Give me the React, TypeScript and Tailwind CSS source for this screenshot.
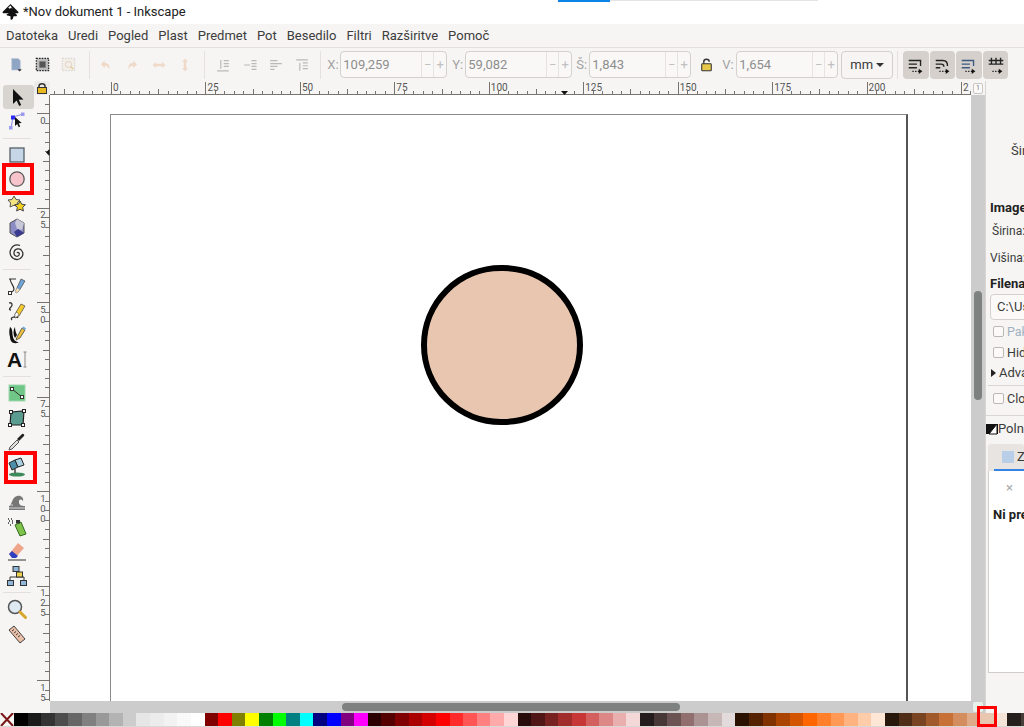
import type { ReactNode } from 'react'

const menuItems = ['Datoteka', 'Uredi', 'Pogled', 'Plast', 'Predmet', 'Pot', 'Besedilo', 'Filtri', 'Razširitve', 'Pomoč']

const swatches = [
  'bg-[#000000]', 'bg-[#1a1a1a]', 'bg-[#333333]', 'bg-[#4d4d4d]', 'bg-[#666666]', 'bg-[#808080]', 'bg-[#999999]', 'bg-[#b3b3b3]',
  'bg-[#cccccc]', 'bg-[#e6e6e6]', 'bg-[#ececec]', 'bg-[#f2f2f2]', 'bg-[#f9f9f9]', 'bg-[#ffffff]',
  'bg-[#800000]', 'bg-[#ff0000]', 'bg-[#808000]', 'bg-[#ffff00]', 'bg-[#008000]', 'bg-[#00ff00]', 'bg-[#008080]', 'bg-[#00ffff]',
  'bg-[#000080]', 'bg-[#0000ff]', 'bg-[#800080]', 'bg-[#ff00ff]',
  'bg-[#2b0000]', 'bg-[#550000]', 'bg-[#800001]', 'bg-[#aa0000]', 'bg-[#d40000]', 'bg-[#ff0001]', 'bg-[#ff2a2a]', 'bg-[#ff5555]', 'bg-[#ff8080]', 'bg-[#ffaaaa]', 'bg-[#ffd5d5]',
  'bg-[#280b0b]', 'bg-[#501616]', 'bg-[#782121]', 'bg-[#a02c2c]', 'bg-[#c83737]', 'bg-[#d35f5f]', 'bg-[#de8787]', 'bg-[#e9afaf]', 'bg-[#f4d7d7]',
  'bg-[#241c1c]', 'bg-[#483737]', 'bg-[#6c5353]', 'bg-[#916f6f]', 'bg-[#ac9393]', 'bg-[#c8b7b7]', 'bg-[#e3dbdb]',
  'bg-[#2b1100]', 'bg-[#552200]', 'bg-[#803300]', 'bg-[#aa4400]', 'bg-[#d45500]', 'bg-[#ff6600]', 'bg-[#ff7f2a]', 'bg-[#ff9955]', 'bg-[#ffb380]', 'bg-[#ffccaa]', 'bg-[#ffe6d5]',
  'bg-[#28170b]', 'bg-[#502d16]', 'bg-[#784421]', 'bg-[#a05a2c]', 'bg-[#c87137]', 'bg-[#d38d5f]', 'bg-[#deaa87]', 'bg-[#e9c6af]', 'bg-[#f4e3d7]',
  'bg-[#241f1c]', 'bg-[#483e37]',
]

function Svg({ children, size = 22 }: { children: ReactNode; size?: number }) {
  return (
    <svg width={size} height={size} viewBox="0 0 22 22" className="shrink-0">
      {children}
    </svg>
  )
}

const tools: Record<string, ReactNode> = {
  select: <path d="M7 3v15l3.6-3.4 2.6 5.4 2-1-2.5-5.2 4.8-.2z" fill="#111" />,
  node: (
    <>
      <path d="M5 18 7 7l10-3" stroke="#8a8ae0" fill="none" />
      <rect x="3" y="16" width="3.5" height="3.5" fill="#9a9af0" />
      <rect x="15" y="2.5" width="3.5" height="3.5" fill="#9a9af0" />
      <rect x="5" y="5.5" width="4" height="4" fill="#2a2af0" />
      <path d="M9 7v9l2.2-2 1.6 3.2 1.4-.7-1.5-3.2 3-.2z" fill="#111" />
    </>
  ),
  rect: <rect x="4" y="4" width="14" height="14" fill="#c6d6e6" stroke="#555e68" strokeWidth="1.3" />,
  ellipse: <circle cx="11" cy="11" r="7.2" fill="#f8c4cc" stroke="#5a5a5a" strokeWidth="1.3" />,
  star: (
    <>
      <path d="m8 3 2 3.500 4 .5-2.800 3 .8 4-4-1.800L4 14l.6-4L2 7l4-.5z" fill="#f2e37e" stroke="#555" />
      <path d="m14 8 1.700 3.200 3.700.5-2.700 2.600.7 3.700-3.400-1.800-3.300 1.800.6-3.700-2.600-2.600 3.700-.5z" fill="#f4d21c" stroke="#444" />
    </>
  ),
  box: (
    <>
      <path d="m11 2 7 4v10l-7 4-7-4V6z" fill="#8c8cc4" stroke="#555" />
      <path d="m11 2 7 4-2 7-5-1-2-6z" fill="#c8c8d8" />
      <path d="m8 15 4-3 6 4-7 4z" fill="#3a3a90" />
    </>
  ),
  spiral: <path d="M11 11c1-1.500 3 0 2 2-1.500 2.500-5.500 1-5-2.500.5-4 6-5 8-1.500 2.500 4-1 9-5.500 8.500-5-.5-8-6-5.500-10.500C7 3 11 2 14 3.500" fill="none" stroke="#333" strokeWidth="1.3" />,
  pencil: (
    <>
      <path d="M3 4h7M4 4c1 5 4 7 4 10s-3 3-4 4" fill="none" stroke="#333" strokeWidth="1.2" />
      <rect x="2.5" y="16.5" width="3" height="3" fill="#fff" stroke="#333" />
      <path d="m10 15 5-11 4 2-6 10-3 2z" fill="#6ea5d8" stroke="#444" strokeWidth=".7" />
      <path d="m10 15 1-2 3 2-1 1-3 2z" fill="#f2d9b0" />
    </>
  ),
  pen: (
    <>
      <path d="M3 3c3-1 4 2 2 4s-2 3 0 3M6 20c-3-3 5-4 6-2" fill="none" stroke="#333" strokeWidth="1.3" />
      <path d="m9 14 6-10 4 2-6 10-4 2z" fill="#f3c92e" stroke="#444" strokeWidth=".7" />
      <path d="m9 14 2-2 2 3-4 3z" fill="#fff" stroke="#444" strokeWidth=".5" />
    </>
  ),
  calligraphy: (
    <>
      <path d="M4 3c3 2 2 6 3 10 .5 3 3 5 6 5-5 3-9 0-9-5-1-3-1-7 0-10z" fill="#111" />
      <path d="M9 3c0 3 1 6 2 8l-2 3C7 11 7 6 9 3z" fill="#111" />
      <path d="m11 13 5-9 3 2-5 8-4 2z" fill="#e9c040" stroke="#333" strokeWidth=".7" />
      <path d="m16 4 1.500-1.500 2.500 2-1 1.500z" fill="#6ea5d8" />
    </>
  ),
  text: (
    <>
      <text x="1" y="18" fontSize="21" fontWeight="700" fill="#111" fontFamily="Liberation Sans, sans-serif">A</text>
      <path d="M17.500 3h3m-1.500 0v15m-1.500 0h3" stroke="#888" fill="none" />
    </>
  ),
  gradient: (
    <>
      <rect x="3" y="3" width="16" height="16" fill="#6fc686" stroke="#9ed8ad" />
      <path d="m6 7 10 8" stroke="#333" />
      <rect x="4.5" y="5.5" width="3" height="3" fill="#fff" stroke="#333" />
      <rect x="14.5" y="13.5" width="3" height="3" fill="#fff" stroke="#333" />
    </>
  ),
  mesh: (
    <>
      <path d="m5 5 13-1-1 14H4z" fill="#5b9c90" stroke="#222" strokeWidth="1.2" />
      <rect x="3.5" y="3.5" width="3" height="3" fill="#fff" stroke="#222" />
      <rect x="16.5" y="2.5" width="3" height="3" fill="#fff" stroke="#222" />
      <rect x="2.5" y="16.5" width="3" height="3" fill="#fff" stroke="#222" />
      <rect x="15.5" y="16.5" width="3" height="3" fill="#fff" stroke="#222" />
    </>
  ),
  dropper: (
    <>
      <path d="m3 19 1-3 7-7 2 2-7 7z" fill="#ddd" stroke="#555" />
      <path d="m11 8 5-5c1-1 3 1 2 2l-5 5z" fill="#222" />
    </>
  ),
  bucket: (
    <>
      <ellipse cx="11" cy="18.5" rx="8" ry="2" fill="#3d8a5c" />
      <path d="M9 13v4" stroke="#444" strokeWidth="1.5" />
      <path d="m3 7 6-3 3 7-6 3z" fill="#4d8fa8" stroke="#222" />
      <path d="m9 4 6-2 3 7-6 2z" fill="#a9cfe0" stroke="#222" />
    </>
  ),
  tweak: (
    <>
      <path d="M3 15c3-1 3-9 8-10 4-1 7 2 6 5-2-2-4-2-4 1s2 4 6 4v4H3z" fill="#777" />
      <path d="M3 14h4M2 17h18" stroke="#fff" strokeWidth=".7" />
    </>
  ),
  spray: (
    <>
      <path d="m9 9 6-3 5 12-6 2z" fill="#7fc34a" stroke="#2f6b1f" />
      <rect x="10" y="4" width="4" height="3.5" fill="#333" />
      <path d="M2 3h1m2 0h1M3 5h1m2 0h1M2 7h1m3 0h1M4 9h1" stroke="#333" strokeWidth="1.3" />
    </>
  ),
  eraser: (
    <>
      <path d="m3 14 9-11 6 5-8 9H6z" fill="#eea58c" />
      <path d="m3 14 3-3 6 5-2 2H6z" fill="#2f3fc0" />
      <path d="M2 20h18" stroke="#333" />
    </>
  ),
  connector: (
    <>
      <path d="M4 16v-4h14v4M11 6v6" fill="none" stroke="#333" />
      <rect x="7" y="1.5" width="6" height="5" fill="#8fb5d8" stroke="#333" />
      <rect x="10.5" y="7" width="6" height="5" fill="#f0d050" stroke="#333" />
      <rect x="1.5" y="15.5" width="6" height="5" fill="#8fb5d8" stroke="#333" />
      <rect x="14.5" y="15.5" width="6" height="5" fill="#8fb5d8" stroke="#333" />
    </>
  ),
  zoom: (
    <>
      <circle cx="9" cy="9" r="6.5" fill="#dfe9f2" stroke="#555" strokeWidth="1.5" />
      <path d="m14 14 5.500 5.500" stroke="#d9a52c" strokeWidth="3" strokeLinecap="round" />
    </>
  ),
  measure: (
    <>
      <path d="m3 7 5-4 11 13-5 4z" fill="#e9bda6" stroke="#444" />
      <path d="m6 8 2-1.500m0 3.500 2-1.500m0 3.500 2-1.500m0 3.500 2-1.500" stroke="#444" />
    </>
  ),
}

function ToolIcon({ name, active, boxed }: { name: string; active?: boolean; boxed?: string }) {
  return (
    <div className={active ? 'relative ml-[3px] flex h-[24px] w-[31px] items-center justify-center rounded-[3px] bg-[#d8d4d0] pr-[3px]' : 'relative ml-[3px] flex h-[24.5px] w-[31px] items-center justify-center pr-[3px]'}>
      <Svg>{tools[name]}</Svg>
      {boxed && <div className={boxed} />}
    </div>
  )
}

function ToolSep() {
  return <div className="mx-[3px] my-[4px] h-px bg-[#e2dfdc]" />
}

function Toolbox() {
  return (
    <div className="flex w-[34px] shrink-0 flex-col bg-[#f6f5f4] pt-[4px]">
      <ToolIcon name="select" active />
      <ToolIcon name="node" />
      <ToolSep />
      <ToolIcon name="rect" />
      <ToolIcon name="ellipse" boxed="absolute -left-[1px] -top-[4px] h-[32px] w-[32px] border-4 border-[#ff0000]" />
      <ToolIcon name="star" />
      <ToolIcon name="box" />
      <ToolIcon name="spiral" />
      <ToolSep />
      <ToolIcon name="pencil" />
      <ToolIcon name="pen" />
      <ToolIcon name="calligraphy" />
      <ToolIcon name="text" />
      <ToolSep />
      <ToolIcon name="gradient" />
      <ToolIcon name="mesh" />
      <ToolIcon name="dropper" />
      <ToolIcon name="bucket" boxed="absolute left-[1px] -top-[4px] h-[33px] w-[33px] border-4 border-[#ff0000]" />
      <div className="h-[11px]" />
      <ToolIcon name="tweak" />
      <ToolIcon name="spray" />
      <ToolIcon name="eraser" />
      <ToolIcon name="connector" />
      <ToolSep />
      <ToolIcon name="zoom" />
      <ToolIcon name="measure" />
    </div>
  )
}

function SmallIcon({ children }: { children: ReactNode }) {
  return <div className="flex w-[26.3px] shrink-0 justify-center">{children}</div>
}

function BarSep() {
  return <div className="mx-[3px] h-[28px] w-px shrink-0 bg-[#e4e1de]" />
}

function NumField({ label, value, width, labelWidth }: { label: string; value: string; width: string; labelWidth: string }) {
  return (
    <div className="flex items-center">
      <span className={labelWidth + ' text-[13px] text-[#a3a3a3]'}>{label}</span>
      <div className={width + ' flex h-[27px] items-center rounded-[4px] border border-[#d4d0cc] bg-[#f9f8f7] text-[13px] text-[#8e8e8e]'}>
        <span className="flex-1 pl-[2px]">{value}</span>
        <span className="flex h-full w-[12px] items-center justify-center border-l border-[#e6e3e0] text-[#c0c0c0]">−</span>
        <span className="flex h-full w-[13px] items-center justify-center border-l border-[#e6e3e0] text-[#c0c0c0]">+</span>
      </div>
    </div>
  )
}

function SnapButton({ children }: { children: ReactNode }) {
  return <div className="flex h-[28px] w-[25.5px] items-center justify-center rounded-[4px] bg-[#d5d0cb]">{children}</div>
}

function Toolbar() {
  return (
    <div className="flex h-[33px] shrink-0 items-center bg-[#f6f5f4] pl-[3px]">
      <SmallIcon>
        <Svg size={16}>
          <path d="M5 2h9l3 3v13H5z" fill="#8fa5c4" stroke="#c4ccd8" />
          <path d="M13 17h6l-3 3z" fill="#333" />
        </Svg>
      </SmallIcon>
      <SmallIcon>
        <Svg size={17}>
          <rect x="3" y="3" width="16" height="16" fill="#bbb" stroke="#222" strokeWidth="1.5" strokeDasharray="2 1.5" />
          <rect x="7" y="7" width="8" height="8" fill="#555" />
        </Svg>
      </SmallIcon>
      <SmallIcon>
        <Svg size={17}>
          <rect x="3" y="3" width="16" height="16" fill="#f3efe6" stroke="#c8c8c8" strokeDasharray="2 1.5" />
          <circle cx="11" cy="11" r="4" fill="none" stroke="#d8c8c0" />
          <path d="m14 14 3 3" stroke="#e3cf9e" strokeWidth="2" />
        </Svg>
      </SmallIcon>
      <div className="w-[4px]" />
      <BarSep />
      <SmallIcon>
        <Svg size={14}>
          <path d="M9 4 3 10l6 6v-4c4 0 6 2 7 6 2-7-2-10-7-10z" fill="#efd9c9" />
        </Svg>
      </SmallIcon>
      <SmallIcon>
        <Svg size={14}>
          <path d="m13 4 6 6-6 6v-4c-4 0-6 2-7 6-2-7 2-10 7-10z" fill="#efd9c9" />
        </Svg>
      </SmallIcon>
      <SmallIcon>
        <Svg size={14}>
          <path d="m1 11 5-5v3h10V6l5 5-5 5v-3H6v3z" fill="#efd9c9" />
        </Svg>
      </SmallIcon>
      <SmallIcon>
        <Svg size={14}>
          <path d="m11 1 5 5h-3v10h3l-5 5-5-5h3V6H6z" fill="#efd9c9" />
        </Svg>
      </SmallIcon>
      <div className="w-[3px]" />
      <BarSep />
      <div className="w-[2px]" />
      {['M3 19h16M8 4v12M12 5h7M12 9h7M12 13h7', 'M3 11h8M13 5h7M13 9h7M13 13h7M13 17h7', 'M3 5h10M3 9h16M3 13h10M3 17h6', 'M3 4h16M8 8v11M12 8h7M12 12h7M12 16h7'].map((d) => (
        <SmallIcon key={d}>
          <Svg size={16}>
            <path d={d} stroke="#b9b9b9" strokeWidth="1.6" fill="none" />
          </Svg>
        </SmallIcon>
      ))}
      <div className="w-[2px]" />
      <BarSep />
      <div className="w-[3px]" />
      <NumField label="X:" labelWidth="w-[13px]" value="109,259" width="w-[107px]" />
      <div className="w-[5px]" />
      <NumField label="Y:" labelWidth="w-[13px]" value="59,082" width="w-[107px]" />
      <div className="w-[4px]" />
      <NumField label="Š:" labelWidth="w-[13px]" value="1,843" width="w-[102px]" />
      <div className="flex w-[31px] justify-center">
        <Svg size={15}>
          <path d="M7 10V7c0-5 8-5 8 0" fill="none" stroke="#333" strokeWidth="2" />
          <rect x="4" y="10" width="14" height="10" rx="1" fill="#e8c84a" stroke="#333" strokeWidth="1.5" />
        </Svg>
      </div>
      <NumField label="V:" labelWidth="w-[14px]" value="1,654" width="w-[102px]" />
      <div className="w-[3px]" />
      <div className="flex h-[28px] w-[52px] items-center justify-center gap-[3px] rounded-[4px] border border-[#d4d0cc] bg-[#f6f5f4] text-[13px] text-[#3a3a3a]">
        mm
        <span className="h-0 w-0 border-x-[4px] border-t-[4px] border-x-transparent border-t-[#333]" />
      </div>
      <div className="w-[1px]" />
      <BarSep />
      <div className="w-[2px]" />
      <div className="flex gap-px">
        {['M3 6h13v6M3 10h9M3 14h9', 'M3 6h8c4 0 5 3 5 6M3 10h6c2 0 3 1 3 3M3 14h5', 'M3 6h13v6M3 10h9M3 14h9', 'M3 6h16M3 10h16M6 3v7M11 3v7M16 3v7'].map((d, i) => (
          <SnapButton key={i}>
            <Svg size={20}>
              <path d={d} stroke={i === 2 ? '#3d5a80' : '#222'} strokeWidth="1.5" fill="none" />
              <path d="M7 18h9" stroke="#222" strokeWidth="1.5" strokeDasharray="1.5 1.5" />
              <path d="m14 15 4 3-4 3z" fill="#111" />
            </Svg>
          </SnapButton>
        ))}
      </div>
    </div>
  )
}

const rulerStep = 94.45

function TopRuler() {
  const ticks = Array.from({ length: 98 }, (_, i) => i)
  const labels = ['0', '25', '50', '75', '100', '125', '150', '175', '200', '2']
  return (
    <svg width="921" height="14" className="block shrink-0">
      <path d="M0 13.5h921" stroke="#77736f" />
      {ticks.map((i) => {
        const x = Math.round(61 - 56.67 + (i * rulerStep) / 10) + 0.5
        const major = (i - 6) % 10 === 0
        const mid = (i - 6) % 5 === 0
        return <path key={i} d={'M' + x + ' 14V' + (major ? 1 : mid ? 8 : 10)} stroke="#77736f" />
      })}
      {labels.map((t, i) => (
        <text key={t + i} x={63 + i * rulerStep} y="10" fontSize="10" fill="#555" fontFamily="Roboto, sans-serif">{t}</text>
      ))}
      <path d="m511 10 7 0-3.5 4z" fill="#111" />
    </svg>
  )
}

function LeftRuler() {
  const ticks = Array.from({ length: 65 }, (_, i) => i)
  const labels = ['0', '25', '50', '75', '100', '125', '15']
  return (
    <svg width="16" height="606" className="block shrink-0">
      <path d="M15.5 0v606" stroke="#77736f" />
      {ticks.map((i) => {
        const y = Math.round(18.5 - 9.45 + (i * rulerStep) / 10) + 0.5
        const major = (i - 1) % 10 === 0
        const mid = (i - 1) % 5 === 0
        return <path key={i} d={'M' + (major ? 3 : mid ? 9 : 11) + ' ' + y + 'H16'} stroke="#77736f" />
      })}
      {labels.map((t, i) => (
        <text key={t} textAnchor="middle" fontSize="9.5" fill="#555" fontFamily="Roboto, sans-serif">
          {t.split('').map((c, j) => (
            <tspan key={j} x="9" y={29 + i * rulerStep + j * 10}>{c}</tspan>
          ))}
        </text>
      ))}
      <path d="M12 57.5l3.5-3.5v7z" fill="#111" />
    </svg>
  )
}

function Canvas() {
  return (
    <div className="min-w-0 flex-1 overflow-hidden bg-white pl-[60px] pt-[19px]">
      <div className="h-[700px] w-[798px] border-t border-r-2 border-l border-t-[#8a8a8a] border-r-[#555] border-l-[#8a8a8a] bg-white pl-[310px] pt-[150px]">
        <div className="h-[160px] w-[162px] rounded-full border-[6px] border-black bg-[#e9c6af]" />
      </div>
    </div>
  )
}

function Check({ label, muted }: { label: string; muted?: boolean }) {
  return (
    <div className={muted ? 'flex h-[21px] items-center pl-[7px] text-[12.5px] text-[#9fb0c0]' : 'flex h-[21px] items-center pl-[7px] text-[12.5px] text-[#3a3a3a]'}>
      <span className="mr-[3px] h-[11px] w-[11px] shrink-0 rounded-[2px] border border-[#bdb8b3] bg-[#fbfaf9]" />
      {label}
    </div>
  )
}

function Panel() {
  return (
    <div className="flex w-[39px] shrink-0 flex-col overflow-hidden whitespace-nowrap border-l border-[#d8d5d2] bg-[#f6f5f4] text-[13px] leading-[18px] text-[#3a3a3a]">
      <div className="h-[61px] shrink-0" />
      <div className="h-[57px] shrink-0 pl-[25px]">
        <span>Širina:</span>
      </div>
      <div className="flex flex-col">
        <div className="pl-[4px] font-bold text-[#222]">Image</div>
        <div className="mt-[5px] pl-[6px] text-[12px]">Širina:</div>
        <div className="mt-[9px] pl-[4px] text-[12px]">Višina:</div>
        <div className="mt-[8px] pl-[4px] font-bold text-[#222]">Filename</div>
        <div className="ml-[4px] mt-[1px] flex h-[26px] w-[60px] shrink-0 items-center rounded-[4px] border border-[#d4d0cc] bg-[#fbfaf9] pl-[6px]">{'C:\\Users'}</div>
      </div>
      <div className="pt-[1px]">
        <Check label="Paket" muted />
        <Check label="Hide" />
        <div className="flex h-[19px] items-center pl-[5px]">
          <span className="mr-[3px] h-0 w-0 border-y-[4px] border-l-[5px] border-y-transparent border-l-[#222]" />
          Advanced
        </div>
        <div className="ml-[2px] mt-[3px] h-px bg-[#d8d5d2]" />
        <div className="mt-[2px]"><Check label="Clone" /></div>
      </div>
      <div className="mt-[6px] flex h-[26px] shrink-0 items-center border-t border-[#d8d5d2]">
        <svg width="12" height="12" viewBox="0 0 12 12" className="shrink-0">
          <path d="M0 1h12v10H0z" fill="#111" />
          <path d="M11 1 3 11h8z" fill="#fff" stroke="#111" />
        </svg>
        <span>Polnilo</span>
      </div>
      <div className="ml-[2px] mt-[3px] flex min-h-0 flex-1 flex-col">
        <div className="flex h-[27px] shrink-0 flex-col rounded-t-[3px] bg-[#e7e4e1]">
          <div className="flex flex-1 items-center pl-[14px]">
            <span className="mr-[3px] h-[12px] w-[12px] shrink-0 bg-[#b9cfe8]" />
            Zapolni
          </div>
          <div className="ml-[6px] h-[2px] bg-[#3584e4]" />
        </div>
        <div className="h-[202px] shrink-0 border-b border-l border-[#d0cdca] bg-white pl-[4px]">
          <div className="pl-[13px] pt-[8px] text-[#aaa]">×</div>
          <div className="mt-[9px] font-bold text-[#222]">Ni predmeta</div>
        </div>
      </div>
    </div>
  )
}

export default function App() {
  return (
    <div className="relative flex h-[727px] w-[1024px] flex-col overflow-hidden bg-white font-['Roboto',sans-serif]">
      <div className="absolute left-[558px] top-0 h-px w-[260px] bg-[#e4e4e4]" />
      <div className="absolute left-[558px] top-0 h-[1.5px] w-[52px] bg-[#0a84e6]" />

      <div className="flex h-[24px] shrink-0 items-center pl-[2px] text-[13px] text-[#222]">
        <svg width="17" height="17" viewBox="0 0 22 22" className="mr-[4px] shrink-0">
          <path d="M11 0 21 10c1 1 0 2-1 2h-3l2 2c1 1 0 2-1 2h-3l-1 3c-1 2-3 2-3 0v-3l-4-1c-2 0-1-2 0-2L9 12 3 12c-2 0-3-1-2-2z" fill="#111" />
          <path d="m11 2-3 3 2 1 2-1 2 2z" fill="#fff" />
        </svg>
        *Nov dokument 1 - Inkscape
      </div>

      <div className="flex h-[24px] shrink-0 items-center gap-[10px] border-b border-[#e2dfdc] bg-[#f6f5f4] pl-[6px] text-[13px] text-[#3c3c3c]">
        {menuItems.map((m) => (
          <span key={m}>{m}</span>
        ))}
      </div>

      <Toolbar />

      <div className="flex h-[632px] shrink-0">
        <Toolbox />
        <div className="flex w-[951px] shrink-0 flex-col">
          <div className="flex h-[14px] shrink-0 bg-[#f6f5f4]">
            <div className="flex w-[16px] shrink-0 items-center justify-center rounded-[2px] bg-[#ecebe9]">
              <svg width="12" height="12" viewBox="0 0 12 12">
                <path d="M3 6V4c0-3 6-3 6 0v2" fill="none" stroke="#333" strokeWidth="1.5" />
                <rect x="1.5" y="5.5" width="9" height="6" fill="#e8b820" stroke="#333" />
              </svg>
            </div>
            <TopRuler />
            <div className="flex flex-1 items-center justify-center">
              <div className="flex h-[11px] w-[10px] items-center justify-center rounded-[2px] border border-[#c8c5c2] bg-[#fbfaf9] text-[7px] text-[#777]">1</div>
            </div>
          </div>
          <div className="flex h-[606px] shrink-0">
            <div className="shrink-0 bg-[#f6f5f4]">
              <LeftRuler />
            </div>
            <Canvas />
            <div className="w-[14px] shrink-0 bg-[#cccccc] pl-[3px] pt-[196px]">
              <div className="h-[109px] w-[8px] rounded-full bg-[#7d8180]" />
            </div>
          </div>
          <div className="flex h-[12px] shrink-0">
            <div className="w-[16px] shrink-0 bg-[#f6f5f4]" />
            <div className="flex min-w-0 flex-1 items-center bg-[#cccccc] pl-[292px]">
              <div className="h-[8px] w-[338px] rounded-full bg-[#7d8180]" />
            </div>
            <div className="flex w-[14px] shrink-0 items-center justify-center bg-[#cccccc]">
              <span className="h-[10px] w-[10px] rounded-[2px] bg-[#e8f2e8]" />
            </div>
          </div>
        </div>
        <Panel />
      </div>

      <div className="relative flex h-[14px] shrink-0 overflow-hidden border-b border-[#d8d8d8] bg-[#d8d8d8]">
        <svg width="14" height="13" viewBox="0 0 14 13" className="shrink-0 bg-[#f6f5f4]">
          <path d="M1 0l12 13M13 0 1 13" stroke="#7a1515" strokeWidth="2" />
        </svg>
        {swatches.map((c, i) => (
          <div key={i} className={c + ' h-full w-[13.61px] shrink-0'} />
        ))}
      </div>
      <div className="absolute left-[977px] top-[706px] h-[21px] w-[20px] border-[3px] border-[#ff0000]" />
    </div>
  )
}
